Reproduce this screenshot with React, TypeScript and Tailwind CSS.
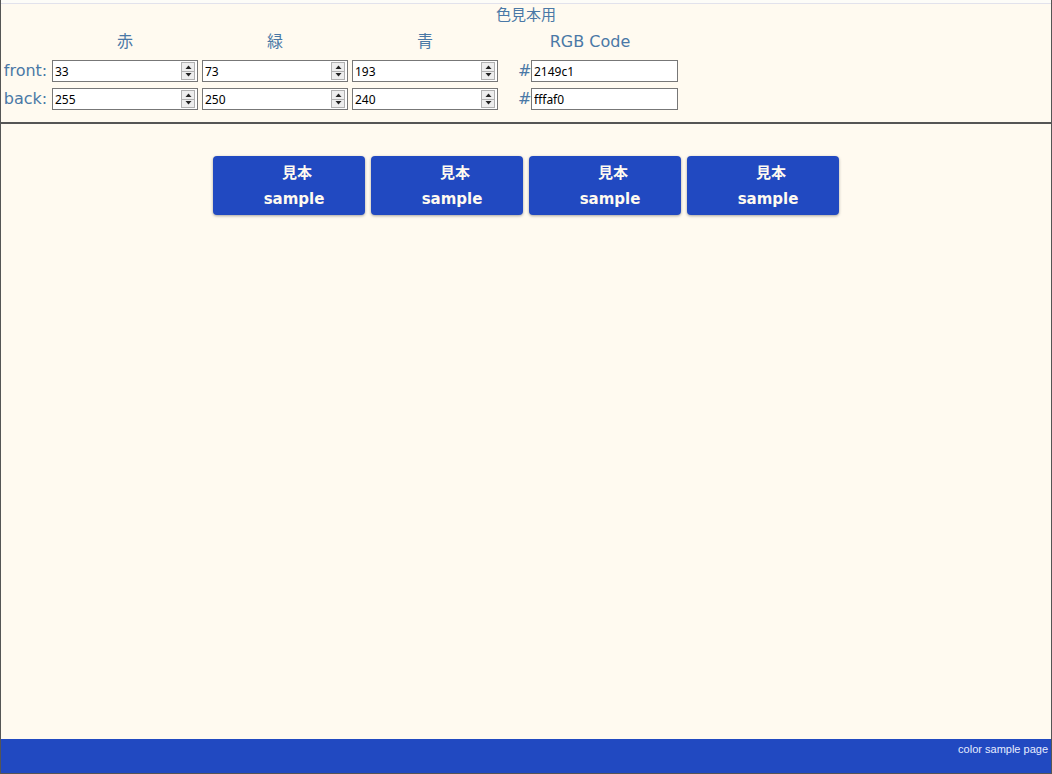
import { useState } from "react";

const labelFont = { fontFamily: '"DejaVu Sans", "Noto Sans CJK JP", sans-serif' };

type RGB = { r: string; g: string; b: string };

function Spinner() {
  return (
    <div className="flex flex-col w-[14px] h-[18px] border border-[#b0b0b0] bg-[#ededed] shrink-0">
      <div className="flex-1 flex items-center justify-center border-b border-[#b0b0b0]">
        <svg width="7" height="4" viewBox="0 0 7 4">
          <path d="M0.5 4 L3.5 0.5 L6.5 4 Z" fill="#222" />
        </svg>
      </div>
      <div className="flex-1 flex items-center justify-center">
        <svg width="7" height="4" viewBox="0 0 7 4">
          <path d="M0.5 0 L6.5 0 L3.5 3.5 Z" fill="#222" />
        </svg>
      </div>
    </div>
  );
}

function NumberBox({ value, onChange }: { value: string; onChange: (v: string) => void }) {
  return (
    <div className="flex items-center w-[146px] h-[22px] border border-[#777] bg-white pr-[2px]">
      <input
        value={value}
        onChange={(e) => onChange(e.target.value)}
        className="flex-1 min-w-0 h-full pl-[2px] text-[12px] text-black outline-none bg-transparent"
        style={{ fontFamily: '"Noto Sans", sans-serif' }}
      />
      <Spinner />
    </div>
  );
}

function toHex(c: RGB) {
  return [c.r, c.g, c.b]
    .map((v) => Math.max(0, Math.min(255, parseInt(v) || 0)).toString(16).padStart(2, "0"))
    .join("");
}

export default function App() {
  const [front, setFront] = useState<RGB>({ r: "33", g: "73", b: "193" });
  const [back, setBack] = useState<RGB>({ r: "255", g: "250", b: "240" });

  const rows: { label: string; c: RGB; set: (c: RGB) => void }[] = [
    { label: "front:", c: front, set: setFront },
    { label: "back:", c: back, set: setBack },
  ];

  return (
    <div className="w-[1052px] h-[774px] flex flex-col bg-[#fffaf0] border-x border-[#555]">
      {/* ヘッダー：入力欄 */}
      <div className="border-b-2 border-[#555]">
        <div className="h-[3px] bg-[#fdfcf8]" />
        <div className="border-t border-[#e2e2ec] pb-[12px] text-[#4a78a6]" style={labelFont}>
          <div className="h-[22px] leading-[22px] text-center text-[15px]">色見本用</div>
          <div className="grid grid-cols-[51px_150px_150px_150px_176px] h-[34px] leading-[32px] text-[16px]">
            <div />
            <div className="w-[146px] text-center">赤</div>
            <div className="w-[146px] text-center">緑</div>
            <div className="w-[146px] text-center">青</div>
            <div className="text-center">RGB Code</div>
          </div>
          <div className="flex flex-col gap-[6px]">
            {rows.map((row) => (
              <div key={row.label} className="grid grid-cols-[51px_150px_150px_150px_176px] h-[22px] items-center">
                <div className="text-center text-[16px] leading-[22px] pr-[2px]">{row.label}</div>
                <NumberBox value={row.c.r} onChange={(v) => row.set({ ...row.c, r: v })} />
                <NumberBox value={row.c.g} onChange={(v) => row.set({ ...row.c, g: v })} />
                <NumberBox value={row.c.b} onChange={(v) => row.set({ ...row.c, b: v })} />
                <div className="flex items-center pl-[16px]">
                  <span className="w-[13px] text-[16px] leading-[22px]">#</span>
                  <input
                    readOnly
                    value={toHex(row.c)}
                    className="w-[147px] h-[22px] border border-[#777] bg-white pl-[2px] text-[12px] text-black outline-none"
                    style={{ fontFamily: '"Noto Sans", sans-serif' }}
                  />
                </div>
              </div>
            ))}
          </div>
        </div>
      </div>

      {/* 見本ボタン */}
      <div className="flex-1 flex justify-center gap-[6px] pt-[32px]">
        {[0, 1, 2, 3].map((i) => (
          <button
            key={i}
            className="w-[152px] h-[59px] rounded-[4px] font-bold text-[15px] leading-[26px] pl-[10px] shadow-[0_1px_3px_rgba(0,0,0,0.35)]"
            style={{ ...labelFont, color: `#${toHex(back)}`, background: `#${toHex(front)}` }}
          >
            <div className="pl-[6px]">見本</div>
            <div>sample</div>
          </button>
        ))}
      </div>

      {/* フッター */}
      <div className="h-[35px] bg-[#2149c1] border-b border-[#555] pr-[3px] pt-[2px]">
        <div
          className="text-right text-[11px] leading-[16px] text-[#e6ecff]"
          style={{ fontFamily: '"Liberation Sans", sans-serif' }}
        >
          color sample page
        </div>
      </div>
    </div>
  );
}
